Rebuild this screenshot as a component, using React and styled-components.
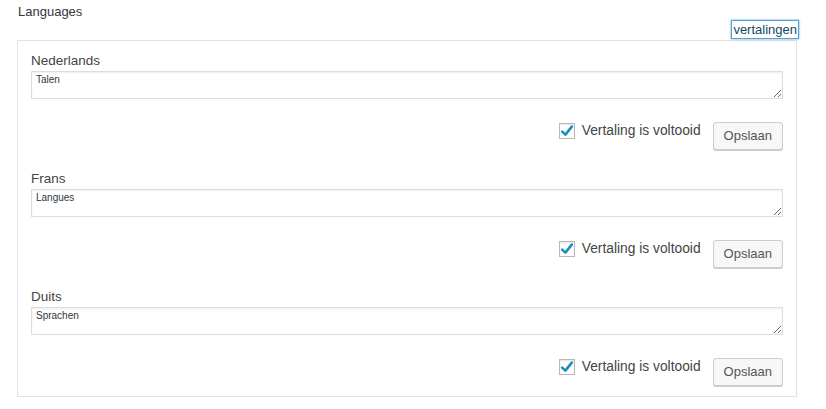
import React from "react";
import styled, { createGlobalStyle } from "styled-components";

const GlobalStyle = createGlobalStyle`
  html, body {
    margin: 0;
    padding: 0;
    background: #fff;
  }
  body {
    font-family: "Liberation Sans", Arial, sans-serif;
    color: #444;
    font-size: 13px;
  }
`;

const languages = [
  { name: "Nederlands", value: "Talen" },
  { name: "Frans", value: "Langues" },
  { name: "Duits", value: "Sprachen" },
];

export default function App() {
  return (
    <>
      <GlobalStyle />
      <Page>
        <Title>Languages</Title>
        <TabRow>
          <TabLink href="#">vertalingen</TabLink>
        </TabRow>
        <Panel>
          {languages.map((lang) => (
            <Section key={lang.name}>
              <FieldLabel>{lang.name}</FieldLabel>
              <TextArea defaultValue={lang.value} />
              <Actions>
                <CheckLabel>
                  <CheckBox>
                    <svg width="16" height="16" viewBox="0 0 16 16">
                      <path
                        d="M3.2 8.6 L6.4 11.6 L12.8 3.6"
                        fill="none"
                        stroke="#1e8cbe"
                        strokeWidth="2.6"
                        strokeLinecap="round"
                        strokeLinejoin="round"
                      />
                    </svg>
                  </CheckBox>
                  Vertaling is voltooid
                </CheckLabel>
                <Button type="button">Opslaan</Button>
              </Actions>
            </Section>
          ))}
        </Panel>
      </Page>
    </>
  );
}

const Page = styled.div`
  width: 780px;
  padding: 0 0 0 17px;
`;

const Title = styled.div`
  padding: 2px 0 0 1px;
  line-height: 19px;
  font-size: 13px;
  color: #32373c;
`;

const TabRow = styled.div`
  display: flex;
  justify-content: flex-end;
  margin-right: -1px;
  margin-bottom: 2px;
`;

const TabLink = styled.a`
  display: inline-block;
  line-height: 17px;
  padding: 0 1px;
  font-size: 13px;
  color: #124964;
  text-decoration: none;
  box-shadow: 0 0 0 1px #5b9dd9, 0 0 2px 1px rgba(30, 140, 190, 0.8);
`;

const Panel = styled.div`
  border: 1px solid #e2e2e2;
  padding: 11px 13px 10px 13px;
  display: flex;
  flex-direction: column;
  gap: 20px;
`;

const Section = styled.div`
  display: flex;
  flex-direction: column;
`;

const FieldLabel = styled.div`
  font-size: 13.5px;
  line-height: 18px;
  color: #444;
  margin-bottom: 1px;
`;

const TextArea = styled.textarea`
  box-sizing: border-box;
  width: 100%;
  height: 28px;
  margin: 0;
  padding: 2px 4px;
  border: 1px solid #ddd;
  box-shadow: inset 0 1px 2px rgba(0, 0, 0, 0.07);
  font-family: "Liberation Sans", Arial, sans-serif;
  font-size: 10px;
  line-height: 12px;
  color: #32373c;
  background: #fff;
  outline: none;
`;

const Actions = styled.div`
  display: flex;
  justify-content: flex-end;
  align-items: flex-start;
  margin-top: 23px;
  gap: 12px;
`;

const CheckLabel = styled.label`
  display: flex;
  align-items: center;
  gap: 7px;
  margin-top: 1px;
  line-height: 16px;
  font-size: 13.8px;
  color: #444;
`;

const CheckBox = styled.span`
  box-sizing: border-box;
  width: 16px;
  height: 16px;
  border: 1px solid #b4b9be;
  background: #fff;
  box-shadow: inset 0 1px 2px rgba(0, 0, 0, 0.1);
  display: flex;
  align-items: center;
  justify-content: center;

  svg {
    display: block;
    flex: none;
  }
`;

const Button = styled.button`
  box-sizing: border-box;
  height: 28px;
  padding: 0 10px;
  border: 1px solid #ccc;
  border-radius: 3px;
  background: #f7f7f7;
  box-shadow: 0 1px 0 #ccc;
  color: #555;
  font-family: "Liberation Sans", Arial, sans-serif;
  font-size: 13px;
  line-height: 26px;
  cursor: pointer;
`;
